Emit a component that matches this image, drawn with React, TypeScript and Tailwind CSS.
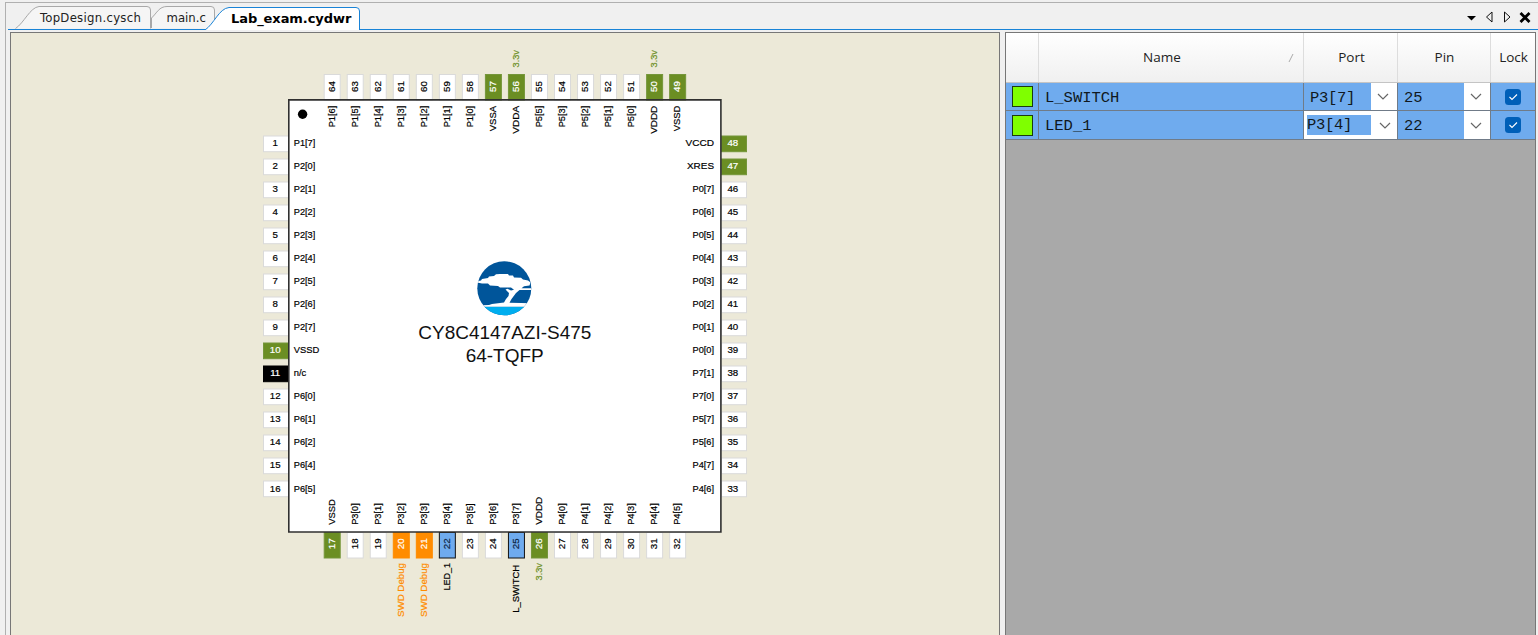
import React from "react";

type Kind = "io" | "power" | "nc" | "debug" | "used";
type Pin = { label: string; kind?: Kind; net?: string };

const FILL: Record<Kind, string> = { io: "#ffffff", power: "#6b8e23", nc: "#000000", debug: "#ff8c00", used: "#6fabee" };
const EDGE: Record<Kind, string> = { io: "#dadada", power: "#75963a", nc: "#000000", debug: "#ff8c00", used: "#111111" };
const INK: Record<Kind, string> = { io: "#000000", power: "#ffffff", nc: "#ffffff", debug: "#ffffff", used: "#0c2340" };
const NET: Record<Kind, string> = { io: "#000000", power: "#6b8e23", nc: "#000000", debug: "#ff8c00", used: "#000000" };

const io = (s: string): Pin[] => s.split(" ").map((label) => ({ label }));

const left: Pin[] = [
  ...io("P1[7] P2[0] P2[1] P2[2] P2[3] P2[4] P2[5] P2[6] P2[7]"),
  { label: "VSSD", kind: "power" },
  { label: "n/c", kind: "nc" },
  ...io("P6[0] P6[1] P6[2] P6[4] P6[5]"),
];
const bottom: Pin[] = [
  { label: "VSSD", kind: "power" },
  ...io("P3[0] P3[1]"),
  { label: "P3[2]", kind: "debug", net: "SWD Debug" },
  { label: "P3[3]", kind: "debug", net: "SWD Debug" },
  { label: "P3[4]", kind: "used", net: "LED_1" },
  ...io("P3[5] P3[6]"),
  { label: "P3[7]", kind: "used", net: "L_SWITCH" },
  { label: "VDDD", kind: "power", net: "3.3v" },
  ...io("P4[0] P4[1] P4[2] P4[3] P4[4] P4[5]"),
];
const right: Pin[] = [
  { label: "VCCD", kind: "power" },
  { label: "XRES", kind: "power" },
  ...io("P0[7] P0[6] P0[5] P0[4] P0[3] P0[2] P0[1] P0[0] P7[1] P7[0] P5[7] P5[6] P4[7] P4[6]"),
];
const top: Pin[] = [
  ...io("P1[6] P1[5] P1[4] P1[3] P1[2] P1[1] P1[0]"),
  { label: "VSSA", kind: "power" },
  { label: "VDDA", kind: "power", net: "3.3v" },
  ...io("P5[5] P5[3] P5[2] P5[1] P5[0]"),
  { label: "VDDD", kind: "power", net: "3.3v" },
  { label: "VSSD", kind: "power" },
];

const WIDTHS: Record<string, number> = {
  VSSD: 25.5, VSSA: 25.5, VDDA: 28, VDDD: 28, VCCD: 28.5, XRES: 27, "n/c": 12.5,
  "SWD Debug": 54, LED_1: 27.5, L_SWITCH: 48, "3.3v": 17.5,
};

function Label({ x, y, text, end, up, fill = "#000" }: { x: number; y: number; text: string; end?: boolean; up?: boolean; fill?: string }) {
  return (
    <text
      x={x}
      y={y}
      fill={fill}
      stroke={fill}
      strokeWidth={0.2}
      textAnchor={end ? "end" : "start"}
      textLength={WIDTHS[text] ?? 21.5}
      lengthAdjust="spacingAndGlyphs"
      transform={up ? `rotate(-90 ${x} ${y})` : undefined}
    >
      {text}
    </text>
  );
}

function SidePins({ pins, flip }: { pins: Pin[]; flip?: boolean }) {
  return (
    <>
      {pins.map((p, i) => {
        const kind = p.kind ?? "io";
        const y = 136 + i * 23;
        const base = 145.5 + i * 23.07;
        return (
          <g key={i}>
            <rect x={flip ? 721.5 : 263.5} y={y} width={25} height={15.7} fill={FILL[kind]} stroke={EDGE[kind]} />
            <text x={flip ? 732.8 : 275.2} y={base} fill={INK[kind]} stroke={INK[kind]} strokeWidth={0.2} textAnchor="middle">
              {flip ? 48 - i : i + 1}
            </text>
            <Label x={flip ? 714 : 293.8} y={base} text={p.label} end={flip} />
          </g>
        );
      })}
    </>
  );
}

function EdgePins({ pins, lower }: { pins: Pin[]; lower?: boolean }) {
  return (
    <>
      {pins.map((p, i) => {
        const kind = p.kind ?? "io";
        const x = 324.2 + i * 23.03;
        const base = x + 10.4;
        const cy = lower ? 543.8 : 86.5;
        return (
          <g key={i}>
            <rect x={x} y={lower ? 532.5 : 74.5} width={16} height={25.5} fill={FILL[kind]} stroke={EDGE[kind]} />
            <text x={base} y={cy} fill={INK[kind]} stroke={INK[kind]} strokeWidth={0.2} textAnchor="middle" transform={`rotate(-90 ${base} ${cy})`}>
              {lower ? i + 17 : 64 - i}
            </text>
            <Label x={base} y={lower ? 524.8 : 105.8} text={p.label} end={!lower} up />
            {p.net && <Label x={base} y={lower ? (p.net === "L_SWITCH" ? 564.8 : 563) : 67.5} text={p.net} end={lower} up fill={NET[kind]} />}
          </g>
        );
      })}
    </>
  );
}

function ChipDiagram() {
  return (
    <svg viewBox="11 33 988 602" width={988} height={602} fontSize={9.7} fontFamily='"Liberation Sans", sans-serif' className="block">
      <rect x={289} y={100} width={432} height={432} fill="#fff" />
      <SidePins pins={left} />
      <EdgePins pins={bottom} lower />
      <SidePins pins={right} flip />
      <EdgePins pins={top} />
      <path d="M288.8 99.9H720.9V532H288.8Z" fill="none" stroke="#303030" strokeWidth={1.6} />
      <circle cx={302.6} cy={114.3} r={4.7} />
      <clipPath id="disc"><circle cx={504.3} cy={288.3} r={27} /></clipPath>
      <g clipPath="url(#disc)">
        <rect x={477} y={261} width={55} height={55} fill="#00559a" />
        <rect x={477} y={306.7} width={55} height={10} fill="#00aeef" />
        <path
          fill="#fff"
          d="M477 281.200L481 280.500L482 279L488 278L489 276.500L494 276L496 274.200L500 274L508 274L509 275.500H513L514 277.500L521 277.800L523 279.500L528 280.500L530.500 282.500L529.500 285.500L524 286.300L521.500 288.200H532V290H519.500L516 293L511.500 299L509.500 302.800L532 303.300V306.700H477V305.500L489 305L492 304L504 302.500L506 299L508.500 296L509 293L505.500 289.500L507.500 288.700L511 290.500L514 289.800L511 287.500L500 287.500L498 286L490 285.500L488 283.500L482 283.500L477 282.500Z"
        />
      </g>
      <g fontSize={18.3} fill="#111">
        <text x={418.3} y={339.4} textLength={173} lengthAdjust="spacingAndGlyphs">CY8C4147AZI-S475</text>
        <text x={465.7} y={362.4} textLength={78} lengthAdjust="spacingAndGlyphs">64-TQFP</text>
      </g>
    </svg>
  );
}

function Tab({ label, className, d, w, active }: { label: string; className: string; d: string; w: number; active?: boolean }) {
  return (
    <div className={`relative h-[24px] shrink-0 ${className}`}>
      <svg className="absolute left-0 top-0" width={w} height={24} viewBox={`0 0 ${w} 24`}>
        <path d={d} fill={active ? "#fff" : "#f5f5f5"} stroke={active ? "#1883d7" : "#a8a8a8"} />
      </svg>
      <span className={`relative block whitespace-nowrap text-[13px] leading-[26px] ${active ? "font-['DejaVu_Sans',sans-serif] font-bold tracking-[-0.07px] text-black [font-stretch:normal]" : "text-[#222]"}`}>{label}</span>
    </div>
  );
}

function TabStrip() {
  return (
    <div className="flex h-[27px] items-end border-b border-[#1883d7] font-['DejaVu_Sans_Condensed','DejaVu_Sans',sans-serif] [font-stretch:condensed]">
      <Tab label="TopDesign.cysch" className="ml-[7px] w-[136px] pl-[25px] tracking-[0.28px]" w={140} d="M0.5 23.5C9 18 15 2.500 24 1.500H132Q135.500 1.500 135.500 5V23.500" />
      <Tab label="main.c" className="w-[54px] pl-[15.500px]" w={66} d="M0.500 23V13C6 8 8 1.500 16 1.500H60Q63.500 1.500 63.500 5V23.500" />
      <Tab label="Lab_exam.cydwr" className="-mb-px w-[156px] pl-[26px]" w={158} d="M0 24C9 18 14 2.500 24 1.500H151Q154.500 1.500 154.500 5V24" active />
      <div className="mb-[5px] ml-auto mr-[7px] flex items-center">
        <svg width={66} height={14} viewBox="0 0 66 14">
          <path d="M2 6H11L6.500 10.500Z" fill="#000" />
          <path d="M27 2V12L21.500 7ZM39.500 2V12L45 7Z" fill="none" stroke="#111" />
          <path d="M55.500 3L64.500 12M64.500 3L55.500 12" stroke="#000" strokeWidth={2.800} />
        </svg>
      </div>
    </div>
  );
}

function Chevron() {
  return (
    <svg width={12} height={7} viewBox="0 0 12 7"><path d="M1 1L6 6L11 1" fill="none" stroke="#666" strokeWidth={1.200} /></svg>
  );
}

function Row({ name, port, pin, editing }: { name: string; port: string; pin: string; editing?: boolean }) {
  return (
    <div className={`grid grid-cols-[33px_265px_94px_93px_44px] border-b border-[#707b88] bg-[#6fabee] font-['Liberation_Mono','Courier_New',monospace] text-[15.500px] text-[#101820] ${editing ? "h-[29px]" : "h-[28px]"}`}>
      <div className="flex items-center border-r border-[#707b88] pl-[6px]">
        <div className="size-[21px] border border-[#1c3a10] bg-[#7fff00]" />
      </div>
      <div className="flex items-center border-r border-[#707b88] pl-[6px] pt-[4px]">{name}</div>
      <div className={`flex items-center justify-between border-r border-[#707b88] ${editing ? "bg-white pl-[3px]" : "pl-[6px]"}`}>
        <span className={editing ? "flex h-[20px] w-[64px] items-center bg-[#6fabee] pt-[2px] tracking-[-0.3px]" : "pt-[4px] tracking-[-0.3px]"}>{port}</span>
        <span className={`flex h-full w-[26px] items-center justify-center bg-white ${editing ? "pl-[2px]" : "pr-[3px]"}`}><Chevron /></span>
      </div>
      <div className="flex items-center justify-between border-r border-[#707b88] pl-[6px]">
        <span className="pt-[4px]">{pin}</span>
        <span className="flex h-full w-[26px] items-center justify-center bg-white pr-[2px]"><Chevron /></span>
      </div>
      <div className="flex items-center justify-center">
        <svg width={16} height={16} viewBox="0 0 16 16">
          <rect width={16} height={16} rx={3.500} fill="#005fb8" />
          <path d="M4.500 8L7 10.500L12 5.500" fill="none" stroke="#fff" strokeWidth={1.100} />
        </svg>
      </div>
    </div>
  );
}

function PinTable() {
  return (
    <div className="flex h-full w-[531px] shrink-0 flex-col border-l border-r border-t border-[#777] bg-[#a9a9a9]">
      <div className="grid h-[50px] shrink-0 grid-cols-[33px_265px_94px_93px_44px] border-b border-[#c4c4c4] bg-linear-to-b from-white to-[#f0f0f0] font-['Open_Sans',sans-serif] text-[13.500px] text-[#222]">
        <div className="border-r border-[#ddd]" />
        <div className="flex items-center border-r border-[#ddd] pl-[104px]">
          <span>Name</span>
          <svg className="ml-auto mr-[6px]" width={9} height={10} viewBox="0 0 9 10"><path d="M1 9L5 1" stroke="#aaa" /></svg>
        </div>
        <div className="flex items-center justify-center border-r border-[#ddd] pl-[2px]">Port</div>
        <div className="flex items-center justify-center border-r border-[#ddd] pl-px">Pin</div>
        <div className="flex items-center justify-center pl-px">Lock</div>
      </div>
      <Row name="L_SWITCH" port="P3[7]" pin="25" />
      <Row name="LED_1" port="P3[4]" pin="22" editing />
    </div>
  );
}

export default function App() {
  return (
    <div className="h-[635px] w-[1538px] overflow-hidden bg-[#f0f0f0] pl-[5px] pt-[2px]">
      <div className="flex h-full flex-col border-l border-t border-[#b0b0b0] pl-[2px]">
        <TabStrip />
        <div className="flex min-h-0 flex-1 bg-[#f0f0f0] pl-[2px] pt-[2px]">
          <div className="h-full w-[990px] shrink-0 border-l border-r border-t border-[#777] bg-[#ece9d8]">
            <ChipDiagram />
          </div>
          <div className="w-[5px] shrink-0" />
          <PinTable />
        </div>
      </div>
    </div>
  );
}
